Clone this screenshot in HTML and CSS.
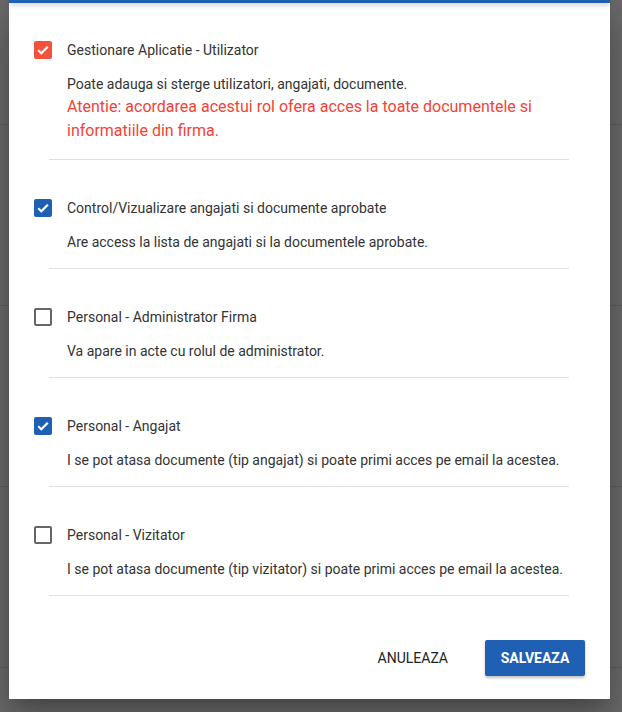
FILE: index.html
```html
<!DOCTYPE html>
<html lang="ro">
<head>
<meta charset="utf-8">
<title>Roluri</title>
<link rel="stylesheet" href="styles.css">
</head>
<body>
<div class="dialog">
  <div class="topbar"></div>
  <div class="content">
    <div class="item">
      <div class="row">
        <span class="cb checked red"><svg viewBox="0 0 18 18"><path d="M4.2 9.3l3.1 3 6.5-6.6" /></svg></span>
        <span class="label">Gestionare Aplicatie - Utilizator</span>
      </div>
      <div class="desc">Poate adauga si sterge utilizatori, angajati, documente.</div>
      <div class="warn">Atentie: acordarea acestui rol ofera acces la toate documentele si informatiile din firma.</div>
    </div>
    <div class="item">
      <div class="row">
        <span class="cb checked"><svg viewBox="0 0 18 18"><path d="M4.2 9.3l3.1 3 6.5-6.6" /></svg></span>
        <span class="label">Control/Vizualizare angajati si documente aprobate</span>
      </div>
      <div class="desc">Are access la lista de angajati si la documentele aprobate.</div>
    </div>
    <div class="item">
      <div class="row">
        <span class="cb"></span>
        <span class="label">Personal - Administrator Firma</span>
      </div>
      <div class="desc">Va apare in acte cu rolul de administrator.</div>
    </div>
    <div class="item">
      <div class="row">
        <span class="cb checked"><svg viewBox="0 0 18 18"><path d="M4.2 9.3l3.1 3 6.5-6.6" /></svg></span>
        <span class="label">Personal - Angajat</span>
      </div>
      <div class="desc">I se pot atasa documente (tip angajat) si poate primi acces pe email la acestea.</div>
    </div>
    <div class="item">
      <div class="row">
        <span class="cb"></span>
        <span class="label">Personal - Vizitator</span>
      </div>
      <div class="desc">I se pot atasa documente (tip vizitator) si poate primi acces pe email la acestea.</div>
    </div>
  </div>
  <div class="actions">
    <button class="btn text">ANULEAZA</button>
    <button class="btn primary">SALVEAZA</button>
  </div>
</div>
</body>
</html>
```

FILE: styles.css
```css
html, body {
  margin: 0;
  padding: 0;
  height: 712px;
  overflow: hidden;
}
body {
  background-color: #6b6b6b;
  background-image: repeating-linear-gradient(to bottom, transparent 0, transparent 124px, rgba(0,0,0,0.12) 124px, rgba(0,0,0,0.12) 125px, transparent 125px, transparent 181px);
  font-family: Roboto, "Liberation Sans", sans-serif;
  color: #333;
}
.dialog {
  margin-left: 9px;
  width: 601px;
  height: 699px;
  background: #fff;
  display: flex;
  flex-direction: column;
  box-shadow: 0 11px 15px -7px rgba(0,0,0,0.2), 0 24px 38px 3px rgba(0,0,0,0.14), 0 9px 46px 8px rgba(0,0,0,0.12);
  position: relative;
}
.topbar {
  height: 3px;
  background: #1f5fb4;
  box-shadow: 0 2px 5px rgba(0,0,0,0.25);
  position: relative;
  z-index: 1;
}
.content {
  padding: 0 41px 0 25px;
}
.item {
  padding: 39px 0 17px;
  position: relative;
}
.item:first-child {
  padding-top: 38px;
}
.item::after {
  content: "";
  position: absolute;
  left: 15px;
  right: 0;
  bottom: 0;
  height: 1px;
  background: #e0e0e0;
}
.row {
  display: flex;
  align-items: center;
  height: 18px;
  gap: 15px;
}
.cb {
  width: 18px;
  height: 18px;
  box-sizing: border-box;
  border: 2px solid #666;
  border-radius: 2px;
  flex: none;
  display: flex;
  align-items: center;
  justify-content: center;
}
.cb.checked {
  border: none;
  background: #1f5fb4;
}
.cb.checked.red {
  background: #f1533a;
}
.cb svg {
  width: 18px;
  height: 18px;
}
.cb svg path {
  fill: none;
  stroke: #fff;
  stroke-width: 2.2;
}
.label {
  font-size: 14px;
  line-height: 18px;
  color: #333;
}
.desc {
  margin-top: 15px;
  padding-left: 33px;
  font-size: 14px;
  line-height: 20px;
  color: #333;
}
.warn {
  margin-top: 1px;
  padding-left: 33px;
  font-size: 16px;
  line-height: 24px;
  color: #f44336;
}
.actions {
  display: flex;
  justify-content: flex-end;
  align-items: center;
  gap: 21px;
  padding: 44px 25px 23px 0;
}
.btn {
  font-family: Roboto, "Liberation Sans", sans-serif;
  font-size: 14px;
  height: 36px;
  border: none;
  border-radius: 2px;
  padding: 0 16px;
  cursor: pointer;
  letter-spacing: 0;
}
.btn.text {
  background: transparent;
  color: #222;
  font-weight: 400;
}
.btn.primary {
  background: #1f5fb4;
  color: #fff;
  font-weight: 700;
  width: 100px;
  padding: 0;
  box-shadow: 0 2px 3px rgba(0,0,0,0.25);
}
```
